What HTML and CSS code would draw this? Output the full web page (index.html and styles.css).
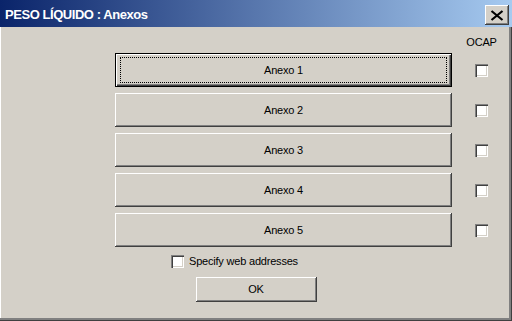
FILE: index.html
```html
<!DOCTYPE html>
<html>
<head>
<meta charset="utf-8">
<link rel="stylesheet" href="styles.css">
</head>
<body>
<div class="window">
  <div class="titlebar">
    <span class="title">PESO LÍQUIDO : Anexos</span>
    <div class="close">
      <svg width="14" height="11" viewBox="0 0 14 11"><path d="M1.5 1 L12.5 10 M12.5 1 L1.5 10" stroke="#000" stroke-width="2.2" fill="none"/></svg>
    </div>
  </div>
  <div class="content">
    <div class="header">
      <div class="spacer"></div>
      <div class="colLabel"><span>OCAP</span></div>
    </div>
    <div class="rows">
      <div class="row"><div class="btn big default"><span>Anexo 1</span></div><div class="check"></div></div>
      <div class="row"><div class="btn big"><span>Anexo 2</span></div><div class="check"></div></div>
      <div class="row"><div class="btn big"><span>Anexo 3</span></div><div class="check"></div></div>
      <div class="row"><div class="btn big"><span>Anexo 4</span></div><div class="check"></div></div>
      <div class="row"><div class="btn big"><span>Anexo 5</span></div><div class="check"></div></div>
    </div>
    <div class="spec"><div class="check"></div><span>Specify web addresses</span></div>
    <div class="okrow"><div class="btn ok"><span>OK</span></div></div>
  </div>
</div>
</body>
</html>
```
FILE: styles.css
```css
html, body {
  margin: 0;
  padding: 0;
  background: #D4D0C8;
}
.window {
  width: 512px;
  height: 321px;
  box-sizing: border-box;
  display: flex;
  flex-direction: column;
  background: #D4D0C8;
  box-shadow: inset -1px -1px #404040, inset -3px -3px #808080, inset 1px 0 #ffffff;
  font-family: "Liberation Sans", Arial, sans-serif;
  font-size: 11px;
  letter-spacing: -0.2px;
  color: #000;
  overflow: hidden;
}
.titlebar {
  height: 27px;
  flex: none;
  display: flex;
  align-items: flex-start;
  justify-content: space-between;
  background: linear-gradient(to right, #0A246A, #A6CAF0);
  padding: 0 3px 0 5px;
}
.title {
  color: #fff;
  font-weight: bold;
  font-size: 13px;
  letter-spacing: -0.45px;
  line-height: 15px;
  padding-top: 7px;
  white-space: nowrap;
}
.close {
  margin-top: 5px;
  width: 24px;
  height: 20px;
  background: #D4D0C8;
  box-shadow: inset -1px -1px #404040, inset 1px 1px #ffffff, inset -2px -2px #808080;
  display: flex;
  align-items: center;
  justify-content: center;
}
.close svg {
  display: block;
  margin-top: 1px;
}
.content {
  flex: 1;
  padding: 9px 0 0 115px;
  display: flex;
  flex-direction: column;
}
.header {
  display: flex;
  height: 13px;
  line-height: 13px;
}
.spacer {
  width: 360px;
}
.colLabel {
  width: 13px;
  display: flex;
  justify-content: center;
  white-space: nowrap;
}
.rows {
  margin-top: 4px;
  display: flex;
  flex-direction: column;
  gap: 6px;
}
.row {
  display: flex;
  align-items: center;
  gap: 23px;
}
.btn {
  position: relative;
  display: flex;
  align-items: center;
  justify-content: center;
  background: #D4D0C8;
  box-shadow: inset -1px -1px #404040, inset 1px 1px #ffffff, inset -2px -2px #808080;
  line-height: 13px;
  white-space: nowrap;
}
.big {
  width: 337px;
  height: 34px;
}
.default {
  box-shadow: inset 0 0 0 1px #000000, inset 2px 2px #ffffff, inset -2px -2px #404040, inset -3px -3px #808080;
}
.default::after {
  content: "";
  position: absolute;
  left: 5px;
  top: 4px;
  right: 5px;
  bottom: 4px;
  border: 1px dotted #000;
}
.check {
  width: 13px;
  height: 13px;
  flex: none;
  background: #ffffff;
  box-shadow: inset 1px 1px #808080, inset 2px 2px #404040, inset -1px -1px #ffffff, inset -2px -2px #D4D0C8;
}
.spec {
  margin-top: 8px;
  margin-left: 56px;
  display: flex;
  align-items: center;
  gap: 5px;
  height: 13px;
  line-height: 13px;
  white-space: nowrap;
}
.okrow {
  margin-top: 9px;
  margin-left: -115px;
  display: flex;
  justify-content: center;
}
.ok {
  width: 121px;
  height: 25px;
}
```
